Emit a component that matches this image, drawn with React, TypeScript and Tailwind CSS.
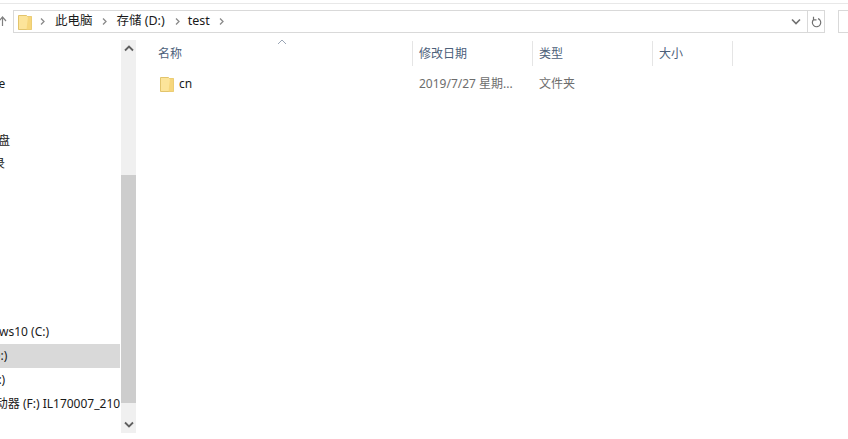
const font = { fontFamily: '"Noto Sans", "Noto Sans CJK SC", sans-serif' };

function Chevron({ className }: { className: string }) {
  return (
    <svg width="7" height="9" viewBox="0 0 7 9" className={className} fill="none" stroke="#8a8a8a" strokeWidth="1.3">
      <path d="M2 1.5 5 4.5 2 7.5" />
    </svg>
  );
}

function Folder({ className }: { className: string }) {
  return (
    <svg viewBox="0 0 14 16" className={className}>
      <path d="M0.5 1.5h8l1 1h4v13h-13z" fill="#fce49a" stroke="#e2c46c" strokeWidth="1" />
      <path d="M10 2.5h3.5v13h-5z" fill="#f6d67c" />
    </svg>
  );
}

function ScrollArrow({ up }: { up?: boolean }) {
  return (
    <svg width="10" height="7" viewBox="0 0 10 7" fill="none" stroke="#606060" strokeWidth="1.8">
      <path d={up ? 'M1 5.5 5 1.5 9 5.5' : 'M1 1.5 5 5.5 9 1.5'} />
    </svg>
  );
}

function NavRow({ text, shift, selected, mt }: { text: string; shift: string; selected?: boolean; mt?: string }) {
  return (
    <div className={`h-6 w-[120px] overflow-hidden flex items-center whitespace-nowrap text-[12px] text-[#1a1a1a] ${selected ? 'bg-[#d9d9d9]' : ''} ${mt ?? ''}`}>
      <span className={`shrink-0 ${shift}`}>{text}</span>
    </div>
  );
}

function HeaderCell({ label, className }: { label: string; className: string }) {
  return (
    <div className={`h-[25px] flex items-center border-r border-[#e5e5e5] text-[12px] text-[#4c607a] pl-[6px] ${className}`}>
      {label}
    </div>
  );
}

export default function App() {
  return (
    <div className="w-[848px] h-[439px] bg-white overflow-hidden" style={font}>
      <div className="h-[4px] border-b border-[#e8e8e8]" />
      <div className="h-[36px] flex items-start pt-[6px]">
        <div className="w-[13px] overflow-hidden">
          <svg width="8" height="22" viewBox="0 0 8 22" fill="none" stroke="#808080" strokeWidth="1.2">
            <path d="M-1 11 2.5 7 6 11M2.5 7v9" />
          </svg>
        </div>
        <div className="w-[814px] h-[23px] border border-[#d9d9d9] flex items-center text-[12.5px] leading-[20px] text-[#1a1a1a]">
          <Folder className="w-[14px] h-[16px] ml-[4px]" />
          <Chevron className="ml-[7px]" />
          <span className="ml-[9px] pb-[2px]">此电脑</span>
          <Chevron className="ml-[9px]" />
          <span className="ml-[8px] pb-[2px]">存储 (D:)</span>
          <Chevron className="ml-[9px]" />
          <span className="ml-[7px] pb-[2px]">test</span>
          <Chevron className="ml-[8px]" />
          <div className="ml-auto w-[23px] flex justify-center">
            <svg width="10" height="7" viewBox="0 0 10 7" fill="none" stroke="#707070" strokeWidth="1.6">
              <path d="M1 1.5 5 5.5 9 1.5" />
            </svg>
          </div>
          <div className="w-[17px] h-full border-l border-[#d9d9d9] flex items-center justify-center">
            <svg width="11" height="12" viewBox="0 0 11 12" fill="none" stroke="#707070" strokeWidth="1.2">
              <path d="M3 3.2A4.2 4.2 0 1 0 7 2.6M2.5 0.8v3h3" />
            </svg>
          </div>
        </div>
        <div className="ml-[13px] w-[10px] h-[23px] border-y border-l border-[#d9d9d9]" />
      </div>
      <div className="flex h-[393px]">
        <div className="w-[121px] pt-[32px]">
          <NavRow text="OneDrive" shift="-ml-[48px]" />
          <NavRow text="网盘" shift="-ml-[14px]" mt="mt-[33px]" />
          <NavRow text="目录" shift="-ml-[19px]" mt="-mt-[1px]" />
          <NavRow text="Windows10 (C:)" shift="-ml-[37px]" mt="mt-[144px]" />
          <NavRow text="存储 (D:)" shift="-ml-[39px]" selected />
          <NavRow text="文档 (E:)" shift="-ml-[39px]" />
          <NavRow text="U盘驱动器 (F:) IL170007_210" shift="-ml-[37px]" />
        </div>
        <div className="w-[15px] h-[393px] bg-[#f0f0f0] flex flex-col">
          <div className="h-[16px] flex items-center justify-center"><ScrollArrow up /></div>
          <div className="h-[119px]" />
          <div className="h-[228px] w-[15px] bg-[#cdcdcd]" />
          <div className="flex-1" />
          <div className="h-[16px] flex items-center justify-center mb-[1px]"><ScrollArrow /></div>
        </div>
        <div className="flex-1 relative">
          <svg width="10" height="6" viewBox="0 0 10 6" fill="none" stroke="#9aa5b5" className="absolute left-[141px] top-[-1px]">
            <path d="M1 5 5 1 9 5" />
          </svg>
          <div className="flex pl-[16px] pt-[1px]">
            <HeaderCell label="名称" className="w-[261px]" />
            <HeaderCell label="修改日期" className="w-[120px]" />
            <HeaderCell label="类型" className="w-[120px]" />
            <HeaderCell label="大小" className="w-[80px]" />
          </div>
          <div className="flex items-center h-[24px] mt-[6px] pl-[16px] text-[12px]">
            <div className="w-[261px] flex items-center pl-[8px] text-[#1a1a1a]">
              <Folder className="w-[14px] h-[16px]" />
              <span className="ml-[5px]">cn</span>
            </div>
            <div className="w-[120px] pl-[6px] text-[#6d6d6d]">2019/7/27 星期...</div>
            <div className="w-[120px] pl-[6px] text-[#6d6d6d]">文件夹</div>
          </div>
        </div>
      </div>
    </div>
  );
}
